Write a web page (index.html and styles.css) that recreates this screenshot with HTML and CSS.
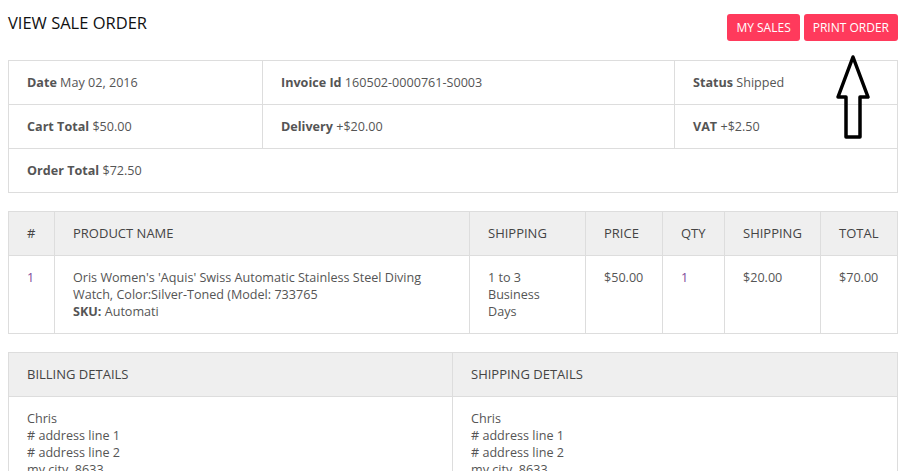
FILE: index.html
```html
<!DOCTYPE html>
<html lang="en">
<head>
    <meta charset="UTF-8">
    <title>View Sale Order</title>
    <link rel="stylesheet" href="styles.css">
</head>
<body>
    <div class="page">
        <div class="page-head">
            <h1>VIEW SALE ORDER</h1>
            <div class="actions">
                <button class="btn">MY SALES</button>
                <button class="btn">PRINT ORDER</button>
            </div>
        </div>

        <!-- order summary -->
        <table class="grid summary">
            <colgroup>
                <col style="width: 254px">
                <col style="width: 412px">
                <col>
            </colgroup>
            <tr>
                <td><b>Date</b> May 02, 2016</td>
                <td><b>Invoice Id</b> 160502-0000761-S0003</td>
                <td><b>Status</b> Shipped</td>
            </tr>
            <tr>
                <td><b>Cart Total</b> $50.00</td>
                <td><b>Delivery</b> +$20.00</td>
                <td><b>VAT</b> +$2.50</td>
            </tr>
            <tr>
                <td colspan="3"><b>Order Total</b> $72.50</td>
            </tr>
        </table>

        <!-- products -->
        <table class="grid items">
            <colgroup>
                <col style="width: 46px">
                <col style="width: 415px">
                <col style="width: 116px">
                <col style="width: 77px">
                <col style="width: 62px">
                <col style="width: 96px">
                <col>
            </colgroup>
            <thead>
                <tr>
                    <th>#</th>
                    <th>PRODUCT NAME</th>
                    <th>SHIPPING</th>
                    <th>PRICE</th>
                    <th>QTY</th>
                    <th>SHIPPING</th>
                    <th>TOTAL</th>
                </tr>
            </thead>
            <tbody>
                <tr>
                    <td class="num">1</td>
                    <td>Oris Women's 'Aquis' Swiss Automatic Stainless Steel Diving Watch, Color:Silver-Toned (Model: 733765<br><b>SKU:</b> Automati</td>
                    <td>1 to 3<br>Business<br>Days</td>
                    <td>$50.00</td>
                    <td class="num">1</td>
                    <td>$20.00</td>
                    <td>$70.00</td>
                </tr>
            </tbody>
        </table>

        <!-- addresses -->
        <table class="grid address">
            <colgroup>
                <col style="width: 444px">
                <col>
            </colgroup>
            <thead>
                <tr>
                    <th>BILLING DETAILS</th>
                    <th>SHIPPING DETAILS</th>
                </tr>
            </thead>
            <tbody>
                <tr>
                    <td>Chris<br># address line 1<br># address line 2<br>my city, 8633</td>
                    <td>Chris<br># address line 1<br># address line 2<br>my city, 8633</td>
                </tr>
            </tbody>
        </table>

        <svg class="pointer" width="36" height="88" viewBox="0 0 36 88">
            <path d="M18 2 L33 42 L25 42 L25 82 L11 82 L11 42 L3 42 Z" fill="none" stroke="#000" stroke-width="3.5" stroke-linejoin="round"/>
        </svg>
    </div>
</body>
</html>
```

FILE: styles.css
```css
body {
    margin: 0;
    font-family: 'Open Sans', 'Liberation Sans', sans-serif;
    font-size: 13px;
    color: #555;
    background: #fff;
}

.page {
    position: relative;
    padding: 14px 9px 0 8px;
}

.page-head {
    display: flex;
    justify-content: space-between;
    align-items: flex-start;
    margin-bottom: 19px;
}

h1 {
    margin: 0;
    font-size: 16.5px;
    font-weight: 400;
    line-height: 17px;
    color: #111;
}

.actions {
    display: flex;
    gap: 4px;
}

.btn {
    height: 27px;
    padding: 0 9px;
    border: none;
    border-radius: 3px;
    background: #ff3a5c;
    color: #fff;
    font-family: inherit;
    font-size: 12px;
    cursor: pointer;
}

.grid {
    width: 890px;
    border-collapse: collapse;
    table-layout: fixed;
    margin-bottom: 18px;
}

.grid td,
.grid th {
    border: 1px solid #ddd;
    padding: 13px 18px;
    line-height: 17px;
    text-align: left;
    vertical-align: top;
}

.grid td {
    font-size: 12.6px;
}

.grid b {
    font-weight: 700;
    color: #555;
}

.grid th {
    background: #efefef;
    font-weight: 400;
    color: #444;
}

.num {
    color: #80479a;
}

.pointer {
    position: absolute;
    left: 835px;
    top: 55px;
}
```
